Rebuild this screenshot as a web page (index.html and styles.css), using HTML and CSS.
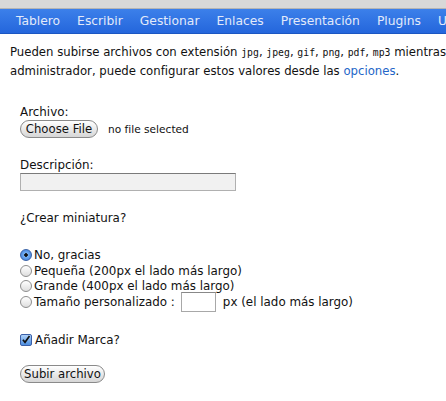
FILE: index.html
```html
<!DOCTYPE html>
<html lang="es">
<head>
<meta charset="utf-8">
<link rel="stylesheet" href="styles.css">
</head>
<body>
<div class="page">
<div class="topstrip"></div>
<nav class="menu">
  <a>Tablero</a><a>Escribir</a><a>Gestionar</a><a>Enlaces</a><a>Presentación</a><a>Plugins</a><a>Usuarios</a>
</nav>
<div class="content">
  <p class="intro">Pueden subirse archivos con extensión <code>jpg</code>, <code>jpeg</code>, <code>gif</code>, <code>png</code>, <code>pdf</code>, <code>mp3</code> mientras que, como<br>administrador, puede configurar estos valores desde las <a class="link">opciones</a>.</p>
  <form class="form">
    <div class="field">
      <label>Archivo:</label>
      <div class="filerow"><span class="btn file-btn">Choose File</span><span class="nofile">no file selected</span></div>
    </div>
    <div class="field">
      <label>Descripción:</label>
      <span class="textbox"></span>
    </div>
    <p class="question">¿Crear miniatura?</p>
    <div class="options">
      <div class="opt"><span class="radio on"></span>No, gracias</div>
      <div class="opt"><span class="radio"></span>Pequeña (200px el lado más largo)</div>
      <div class="opt"><span class="radio"></span>Grande (400px el lado más largo)</div>
      <div class="opt"><span class="radio"></span>Tamaño personalizado : <span class="small-box"></span> px (el lado más largo)</div>
    </div>
    <div class="check"><span class="checkbox"><svg width="12" height="12" viewBox="0 0 12 12"><path d="M2.3 5.8 L4.8 8.8 L10.2 1.2" fill="none" stroke="#111" stroke-width="2"/></svg></span>Añadir Marca?</div>
    <div class="submit"><span class="btn submit-btn">Subir archivo</span></div>
  </form>
</div>
</div>
</body>
</html>
```
FILE: styles.css
```css
html, body { margin: 0; padding: 0; background: #fff; }
body { font-family: "DejaVu Sans", "Noto Sans", sans-serif; font-size: 11.9px; color: #111; overflow: hidden; }
.page { width: 560px; }
.topstrip { height: 8px; background: #d8d8d8; border-bottom: 1px solid #b4b4b4; }
.menu { height: 24px; background: linear-gradient(#3c80ea, #2466dc); border-bottom: 1px solid #1b56c2; display: flex; padding-left: 16px; white-space: nowrap; overflow: hidden; align-items: center; }
.menu a { color: #e2eafa; font-size: 12.3px; margin-right: 17px; }
.content { padding: 9px 10px 0 10px; }
.intro { margin: 0; line-height: 18px; white-space: nowrap; font-size: 11.7px; }
.intro code { font-family: "DejaVu Sans Mono", monospace; font-size: 9.8px; }
.link { color: #2466c8; }
.form { padding: 25px 10px 0 10px; }
.field { display: flex; flex-direction: column; align-items: flex-start; margin-bottom: 20px; }
.field label { line-height: 15px; }
.filerow { display: flex; align-items: center; }
.btn { display: inline-block; box-sizing: border-box; height: 18px; line-height: 16px; border: 1px solid #8a8a8a; border-radius: 9px; background: linear-gradient(#ffffff, #eaeaea 50%, #d6d6d6); color: #111; text-align: center; font-size: 11.7px; }
.file-btn { width: 78px; }
.submit-btn { width: 85px; }
.nofile { margin-left: 10px; font-size: 10.6px; }
.textbox { width: 216px; height: 18px; box-sizing: border-box; border: 1px solid #b0b0b0; border-top-color: #7a7a7a; background: #f1f1f1; }
.question { margin: 0; line-height: 15px; }
.options { margin-top: 21px; }
.opt { display: flex; align-items: center; height: 15.7px; white-space: nowrap; }
.radio { width: 12px; height: 12px; border: 1px solid #8e8e8e; border-radius: 50%; background: linear-gradient(#fff, #dedede); margin-right: 2px; box-sizing: border-box; flex: none; }
.radio.on { background: radial-gradient(circle, #111 0 1.5px, #7ab2f2 2px, #2f72d6 100%); border-color: #3a63a8; }
.small-box { display: inline-block; width: 35px; height: 20px; border: 1px solid #a8a8a8; border-top-color: #888; margin: 0 7px 0 6px; background: #fff; box-sizing: border-box; }
.check { display: flex; align-items: center; margin-top: 22px; line-height: 16px; }
.checkbox { width: 12px; height: 12px; box-sizing: border-box; border: 1px solid #3a5fa8; border-radius: 2px; background: linear-gradient(#b0d2f8, #4c8ee0); margin-right: 3px; display: inline-flex; align-items: center; justify-content: center; }
.checkbox svg { display: block; }
.submit { margin-top: 17px; }
```
